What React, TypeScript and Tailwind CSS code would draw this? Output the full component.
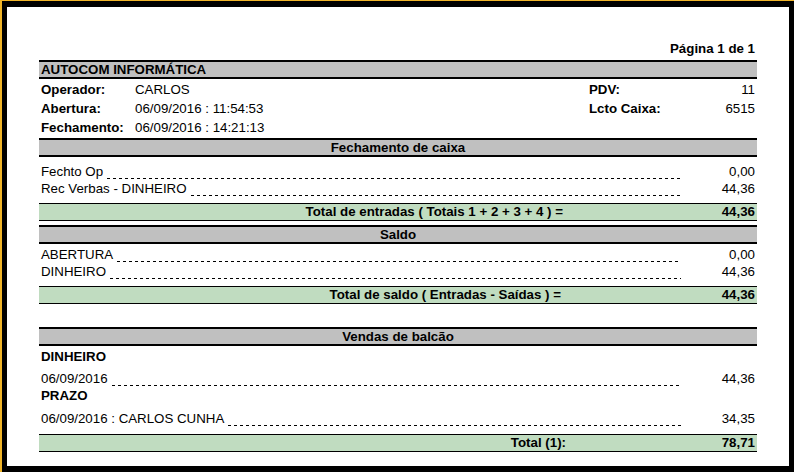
import React from "react";

const dots =
  "h-px bg-[repeating-linear-gradient(to_right,#000_0px,#000_3px,transparent_3px,transparent_6px)]";

function SectionHeader({ title, className = "" }: { title: string; className?: string }) {
  return (
    <div
      className={`h-[19px] border-y-2 border-black bg-[#c0c0c0] text-center font-bold leading-[15px] ${className}`}
    >
      {title}
    </div>
  );
}

function DotRow({ label, value, className = "" }: { label: string; value: string; className?: string }) {
  return (
    <div className={`flex h-[17px] leading-[17px] ${className}`}>
      <div className="flex w-[642px] items-start pl-[2px]">
        <span className="whitespace-nowrap">{label}</span>
        <div className={`ml-[4px] mt-[15px] flex-1 ${dots}`} />
      </div>
      <div className="flex-1 pr-[2px] text-right">{value}</div>
    </div>
  );
}

function TotalRow({
  label,
  value,
  labelWidth,
  className = "",
}: {
  label: string;
  value: string;
  labelWidth: string;
  className?: string;
}) {
  return (
    <div
      className={`flex h-[18px] border-y border-black bg-[#c0dcc0] font-bold leading-[16px] ${className}`}
    >
      <div className={`${labelWidth} whitespace-nowrap text-right`}>{label}</div>
      <div className="flex-1 pr-[2px] text-right">{value}</div>
    </div>
  );
}

export default function App() {
  return (
    <div className="h-[472px] w-[794px] border-l-2 border-t border-[#f0b428] font-['Liberation_Sans',Arial,sans-serif] text-[13.3px] text-black">
      <div className="h-full w-full border-b-[6px] border-l-[5px] border-r-[5px] border-t-[6px] border-black bg-white px-[32px]">
        <div className="mt-[34px] h-[15px] pr-[2px] text-right font-bold leading-[15px]">Página 1 de 1</div>

        <div className="mt-[4px] h-[19px] border-y-2 border-black bg-[#c0c0c0] pl-[2px] font-bold leading-[15px]">
          AUTOCOM INFORMÁTICA
        </div>

        <div className="mb-[1px] pt-[1px]">
          <div className="flex h-[19px] leading-[19px]">
            <span className="w-[96px] pl-[2px] font-bold">Operador:</span>
            <span className="w-[454px]">CARLOS</span>
            <span className="w-[100px] font-bold">PDV:</span>
            <span className="flex-1 pr-[2px] text-right">11</span>
          </div>
          <div className="flex h-[19px] leading-[19px]">
            <span className="w-[96px] pl-[2px] font-bold">Abertura:</span>
            <span className="w-[454px]">06/09/2016 : 11:54:53</span>
            <span className="w-[100px] font-bold">Lcto Caixa:</span>
            <span className="flex-1 pr-[2px] text-right">6515</span>
          </div>
          <div className="flex h-[19px] leading-[19px]">
            <span className="w-[96px] pl-[2px] font-bold">Fechamento:</span>
            <span>06/09/2016 : 14:21:13</span>
          </div>
        </div>

        <SectionHeader title="Fechamento de caixa" />
        <DotRow className="mt-[6px]" label="Fechto Op" value="0,00" />
        <DotRow label="Rec Verbas - DINHEIRO" value="44,36" />
        <TotalRow
          className="mt-[6px]"
          labelWidth="w-[524px]"
          label="Total de entradas ( Totais 1 + 2 + 3 + 4 ) ="
          value="44,36"
        />

        <SectionHeader className="mt-[4px]" title="Saldo" />
        <DotRow className="mt-[2px]" label="ABERTURA" value="0,00" />
        <DotRow label="DINHEIRO" value="44,36" />
        <TotalRow
          className="mt-[6px]"
          labelWidth="w-[522px]"
          label="Total de saldo ( Entradas - Saídas ) ="
          value="44,36"
        />

        <SectionHeader className="mt-[23px]" title="Vendas de balcão" />
        <div className="mt-[2px] h-[17px] pl-[2px] font-bold leading-[17px]">DINHEIRO</div>
        <DotRow className="mt-[5px]" label="06/09/2016" value="44,36" />
        <div className="h-[17px] pl-[2px] font-bold leading-[17px]">PRAZO</div>
        <DotRow className="mt-[6px]" label="06/09/2016 : CARLOS CUNHA" value="34,35" />
        <TotalRow className="mt-[7px]" labelWidth="w-[527px]" label="Total (1):" value="78,71" />
      </div>
    </div>
  );
}
